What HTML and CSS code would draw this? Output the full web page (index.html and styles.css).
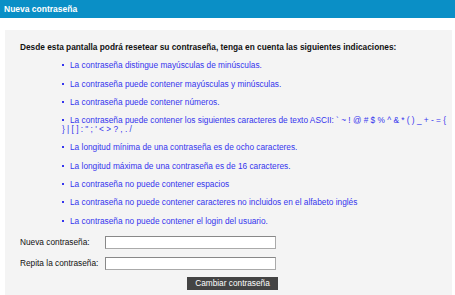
FILE: index.html
```html
<!DOCTYPE html>
<html>
<head>
  <title>Nueva contraseña</title>
  <meta charset="UTF-8">
  <link rel="stylesheet" href="styles.css">
</head>
<body>
  <div class="titlebar">Nueva contraseña</div>

  <div class="panel">
    <p class="intro">Desde esta pantalla podrá resetear su contraseña, tenga en cuenta las siguientes indicaciones:</p>
    <ul class="rules">
      <li>La contraseña distingue mayúsculas de minúsculas.</li>
      <li>La contraseña puede contener mayúsculas y minúsculas.</li>
      <li>La contraseña puede contener números.</li>
      <li>La contraseña puede contener los siguientes caracteres de texto ASCII: ` ~ ! @ # $ % ^ &amp; * ( ) _ + - = { } | [ ] : " ; ' &lt; &gt; ? , . /</li>
      <li>La longitud mínima de una contraseña es de ocho caracteres.</li>
      <li>La longitud máxima de una contraseña es de 16 caracteres.</li>
      <li>La contraseña no puede contener espacios</li>
      <li>La contraseña no puede contener caracteres no incluidos en el alfabeto inglés</li>
      <li>La contraseña no puede contener el login del usuario.</li>
    </ul>
    <form class="pwform">
      <label for="pw-new">Nueva contraseña:</label>
      <input type="password" id="pw-new">
      <label for="pw-repeat">Repita la contraseña:</label>
      <input type="password" id="pw-repeat">
      <button type="button">Cambiar contraseña</button>
    </form>
  </div>
</body>
</html>
```

FILE: styles.css
```css
/* Reset styles */
* {
  margin: 0;
  padding: 0;
  box-sizing: border-box;
}

body {
  font-family: 'Liberation Sans', Arial, sans-serif;
  font-size: 8.3px;
  color: #111;
  background-color: #fff;
}

/* Title bar */
.titlebar {
  height: 18px;
  line-height: 18px;
  padding-left: 4px;
  background-color: #0a8fc6;
  color: #fff;
  font-size: 8.5px;
  font-weight: 700;
}

/* Panel */
.panel {
  margin: 12px 3px 0 5px;
  padding: 13px 3px 20px 15px;
  background-color: #f4f4f4;
}

.intro {
  font-weight: 700;
  line-height: 9px;
  margin-bottom: 9.3px;
}

.rules {
  list-style: none;
  padding-left: 42px;
  color: #3535ee;
}

.rules li {
  line-height: 9px;
  margin-bottom: 9.3px;
}

.rules li::before {
  content: "";
  display: inline-block;
  width: 2px;
  height: 2px;
  margin-right: 6px;
  vertical-align: 2px;
  background-color: #3535ee;
}

/* Form */
.pwform {
  display: grid;
  grid-template-columns: 85px 171px;
  row-gap: 8px;
  align-items: center;
  margin-top: 10px;
}

.pwform label {
  line-height: 9px;
}

.pwform input {
  height: 13px;
  border: 1px solid #aaa;
  border-top-color: #888;
  border-left-color: #888;
  background-color: #fff;
}

.pwform button {
  grid-column: 2;
  justify-self: end;
  width: 91px;
  height: 13px;
  margin-right: -2px;
  margin-top: -1px;
  border: none;
  background-color: #444;
  color: #fff;
  font-family: 'Liberation Sans', Arial, sans-serif;
  font-size: 8.3px;
}
```
